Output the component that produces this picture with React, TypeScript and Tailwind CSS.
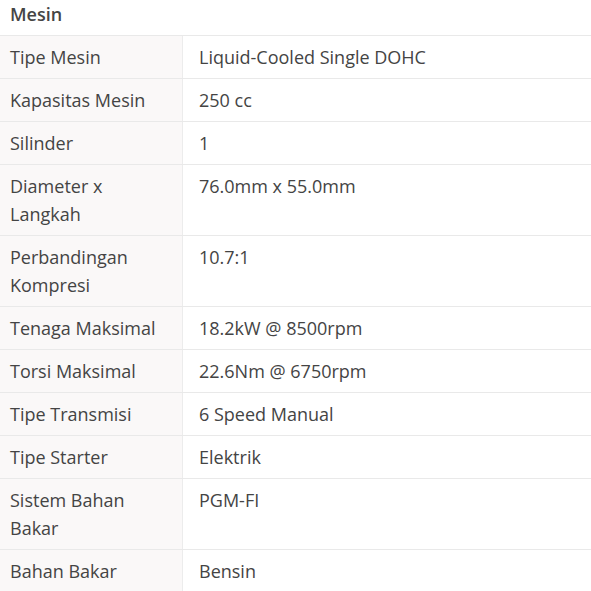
import React from 'react';

const specs: { label: string; value: string }[] = [
  { label: 'Tipe Mesin', value: 'Liquid-Cooled Single DOHC' },
  { label: 'Kapasitas Mesin', value: '250 cc' },
  { label: 'Silinder', value: '1' },
  { label: 'Diameter x Langkah', value: '76.0mm x 55.0mm' },
  { label: 'Perbandingan Kompresi', value: '10.7:1' },
  { label: 'Tenaga Maksimal', value: '18.2kW @ 8500rpm' },
  { label: 'Torsi Maksimal', value: '22.6Nm @ 6750rpm' },
  { label: 'Tipe Transmisi', value: '6 Speed Manual' },
  { label: 'Tipe Starter', value: 'Elektrik' },
  { label: 'Sistem Bahan Bakar', value: 'PGM-FI' },
  { label: 'Bahan Bakar', value: 'Bensin' },
];

const App: React.FC = () => (
  <div className="w-[591px] h-[591px] overflow-hidden bg-white text-[18px] leading-[28px] text-[#444]" style={{ fontFamily: '"Open Sans", "Noto Sans", sans-serif' }}>
    <div className="h-[36px] px-[10px] font-semibold text-[#454545] border-b border-[#e9e9e9]">Mesin</div>
    {specs.map((item) => (
      <div key={item.label} className="flex border-b border-[#e9e9e9]">
        <div className="w-[183px] shrink-0 bg-[#faf8f8] border-r border-[#ececec] px-[10px] py-[7px]">{item.label}</div>
        <div className="flex-1 pl-[16px] pr-[10px] py-[7px]">{item.value}</div>
      </div>
    ))}
  </div>
);

export default App;
